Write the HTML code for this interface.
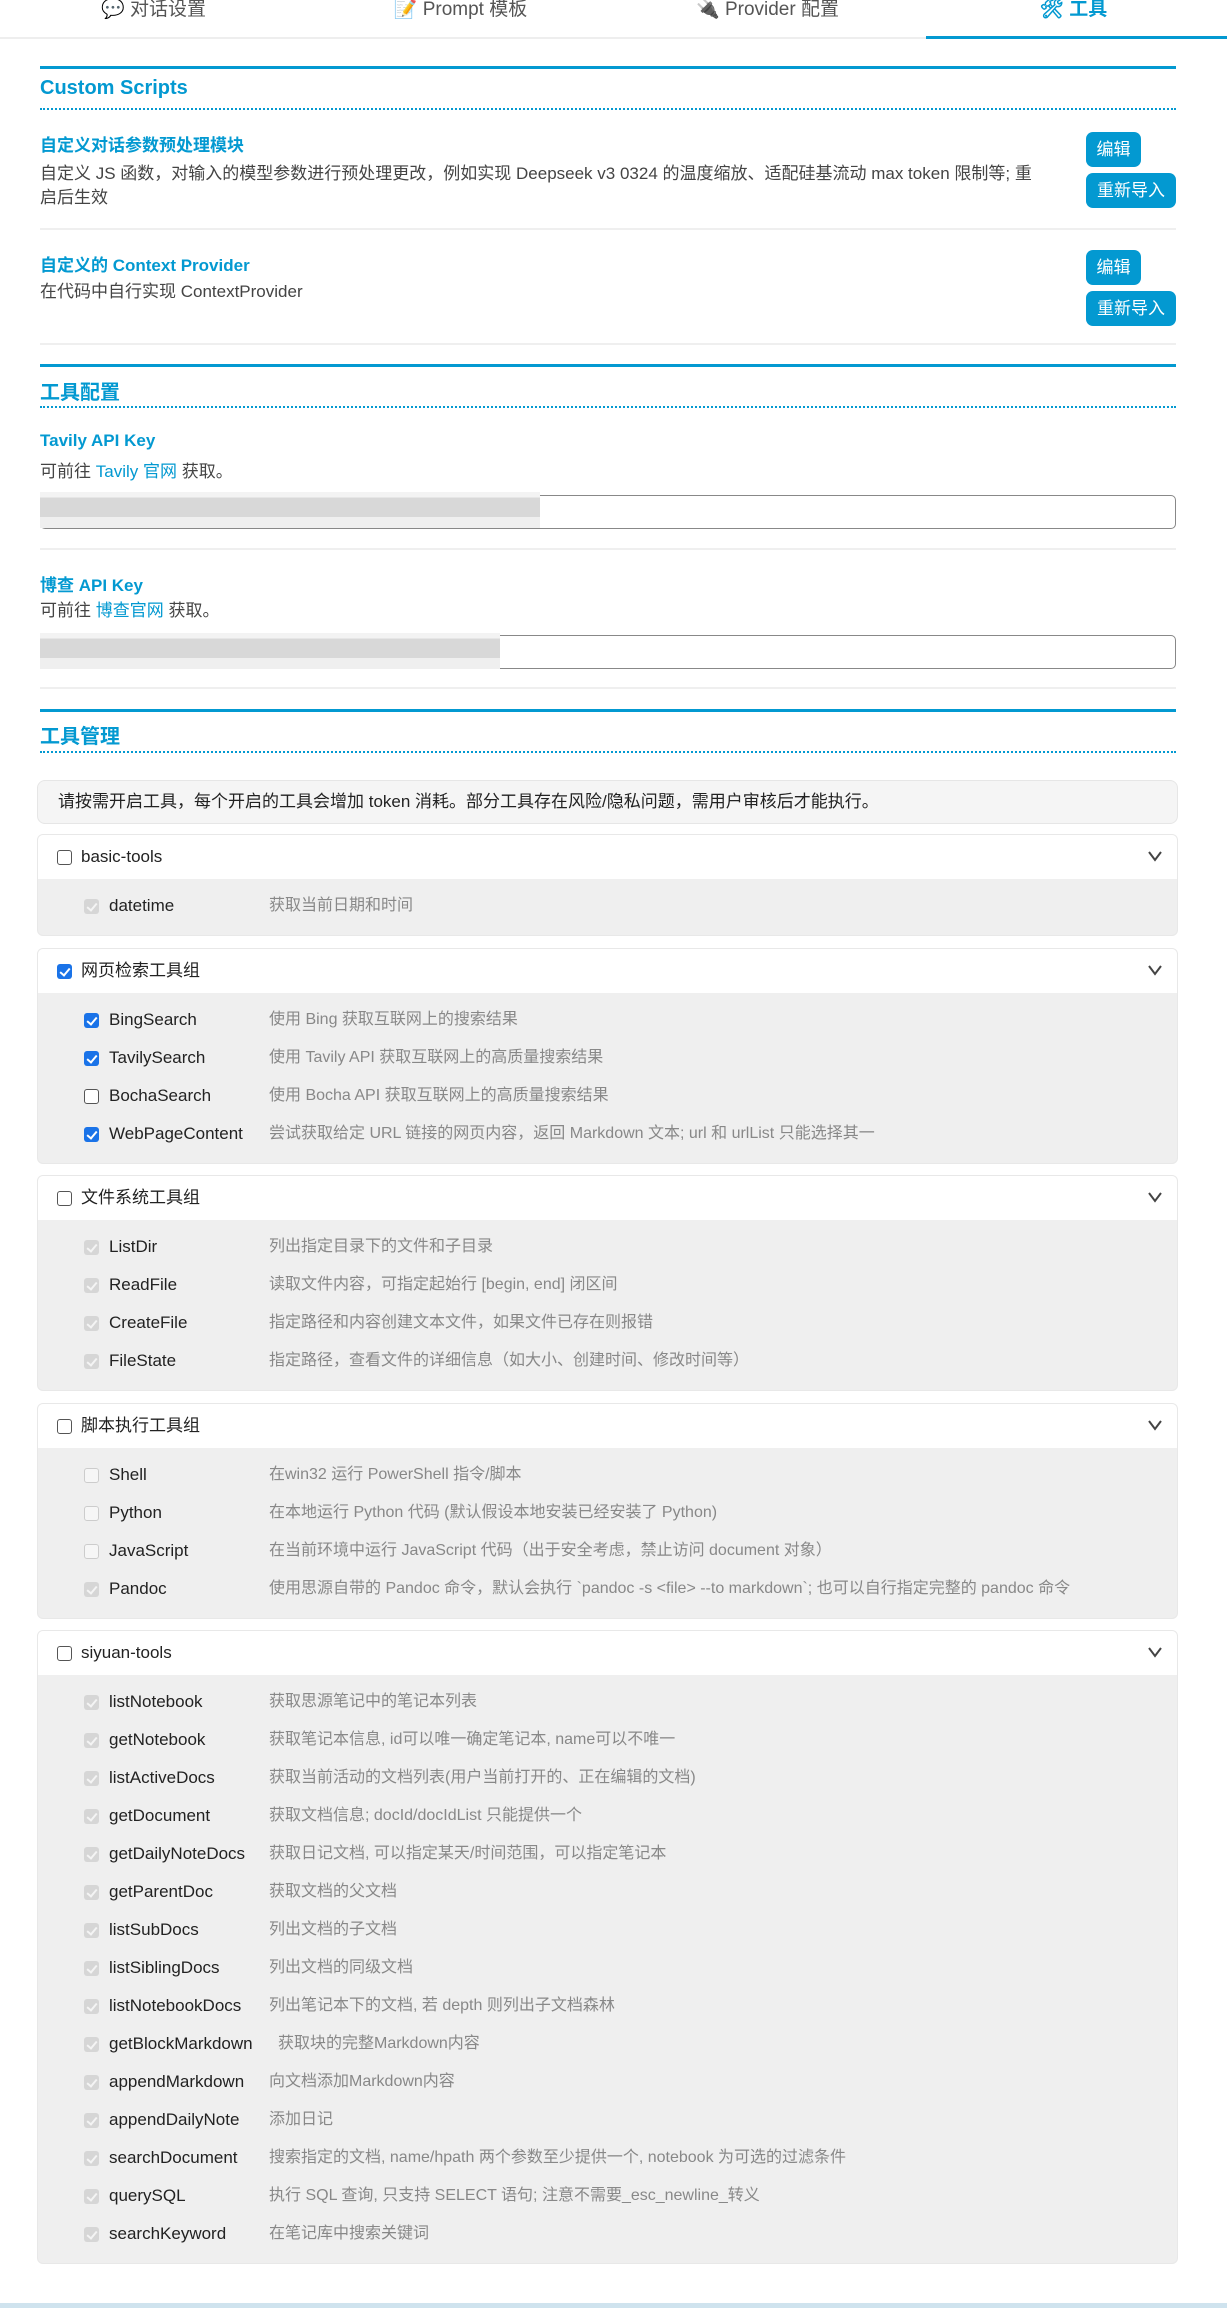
<!DOCTYPE html>
<html><head><meta charset="utf-8"><style>
*{box-sizing:border-box;margin:0;padding:0}
body{width:1227px;height:2308px;background:#fff;font-family:"Liberation Sans","Noto Sans CJK SC",sans-serif;color:#333;position:relative;overflow:hidden}
.a{position:absolute}
.tab{position:absolute;top:0;width:307px;height:38px;text-align:center;font-size:19px;color:#555;line-height:20px}
.blue{color:#0399d1}
.secl{position:absolute;left:40px;width:1136px;height:3px;background:#0399d1}
.dot{position:absolute;left:40px;width:1136px;border-top:2px dotted #0399d1}
.h{position:absolute;left:40px;font-size:20px;font-weight:bold;color:#0399d1}
.t{position:absolute;left:40px;font-size:17px;font-weight:bold;color:#0399d1}
.d{position:absolute;left:40px;font-size:17px;color:#444;line-height:24px}
.sep{position:absolute;left:40px;width:1136px;height:2px;background:#efefef}
.btn{position:absolute;left:1086px;height:35px;background:#0399d1;color:#fff;border-radius:7px;font-size:17px;line-height:35px;text-align:center}
.inp{position:absolute;left:40px;width:1136px;height:34px;border:1px solid #888;border-radius:5px}
.blur{position:absolute;left:40px;height:36px;background:linear-gradient(#f3f3f3 0,#f3f3f3 15%,#d8d8d8 15%,#d8d8d8 70%,#efefef 70%)}
.grp{position:absolute;left:37px;width:1141px;border:1px solid #e8e8e8;border-radius:6px;overflow:hidden;background:#efefef}
.gh{height:44px;background:#fff;position:relative;font-size:17px;line-height:44px;padding-left:43px;color:#222}
.gh .cb{left:19px;top:15px}
.chev{position:absolute;right:14px;top:14px;width:16px;height:14px}
.body{padding:8px 0 10px}
.row{height:38px;position:relative;font-size:17px;line-height:38px}
.row .cb{left:46px;top:12px}
.row .n{position:absolute;left:71px;color:#222}
.row .s{position:absolute;left:231px;font-size:16px;color:#888}
.cb{position:absolute;width:15px;height:15px;border-radius:3px}
.cb.off{border:1.5px solid #555;background:#fff}
.cb.on{background:#1a73e8}
.cb.dis{background:#d6d6d6}
.cb.doff{border:1px solid #ccc;background:#f6f6f6}
.cb.on::after,.cb.dis::after{content:"";position:absolute;left:5px;top:2px;width:4px;height:8px;border:solid #fff;border-width:0 2px 2px 0;transform:rotate(40deg)}
.cb.dis::after{border-color:#f4f4f4}
</style></head><body>
<div class="a" style="left:0;top:37px;width:1227px;height:2px;background:#eee"></div>
<div class="a" style="left:926px;top:36px;width:301px;height:3px;background:#0399d1"></div>
<div class="tab" style="left:0"><span style="color:#7cc0ea">💬</span> 对话设置</div>
<div class="tab" style="left:307px">📝 Prompt 模板</div>
<div class="tab" style="left:614px">🔌 Provider 配置</div>
<div class="tab" style="left:920px;color:#0399d1;font-weight:bold">🛠 工具</div>

<div class="secl" style="top:66px"></div>
<div class="h" style="top:77px">Custom Scripts</div>
<div class="dot" style="top:108px"></div>
<div class="t" style="top:131px">自定义对话参数预处理模块</div>
<div class="d" style="top:162px;width:1000px">自定义 JS 函数，对输入的模型参数进行预处理更改，例如实现 Deepseek v3 0324 的温度缩放、适配硅基流动 max token 限制等; 重启后生效</div>
<div class="btn" style="top:132px;width:55px">编辑</div>
<div class="btn" style="top:173px;width:90px">重新导入</div>
<div class="sep" style="top:228px"></div>
<div class="t" style="top:251px">自定义的 Context Provider</div>
<div class="d" style="top:280px">在代码中自行实现 ContextProvider</div>
<div class="btn" style="top:250px;width:55px">编辑</div>
<div class="btn" style="top:291px;width:90px">重新导入</div>
<div class="sep" style="top:343px"></div>

<div class="secl" style="top:364px"></div>
<div class="h" style="top:376px">工具配置</div>
<div class="dot" style="top:406px"></div>
<div class="t" style="top:431px">Tavily API Key</div>
<div class="d" style="top:460px">可前往 <span class="blue">Tavily 官网</span> 获取。</div>
<div class="inp" style="top:495px"></div>
<div class="blur" style="top:492px;width:500px"></div>
<div class="sep" style="top:548px"></div>
<div class="t" style="top:571px">博查 API Key</div>
<div class="d" style="top:599px">可前往 <span class="blue">博查官网</span> 获取。</div>
<div class="inp" style="top:635px"></div>
<div class="blur" style="top:633px;width:460px"></div>
<div class="sep" style="top:687px"></div>

<div class="secl" style="top:709px"></div>
<div class="h" style="top:720px">工具管理</div>
<div class="dot" style="top:751px"></div>
<div class="a" style="left:37px;top:780px;width:1141px;height:44px;background:#f5f5f5;border:1px solid #e6e6e6;border-radius:8px;font-size:17px;line-height:42px;padding-left:20px;color:#222">请按需开启工具，每个开启的工具会增加 token 消耗。部分工具存在风险/隐私问题，需用户审核后才能执行。</div>

<div class="grp" style="top:834px">
<div class="gh"><span class="cb off"></span>basic-tools<svg class="chev" viewBox="0 0 16 14"><path d="M2 3l6 8 6-8" fill="none" stroke="#444" stroke-width="2"/></svg></div>
<div class="body"><div class="row"><span class="cb dis"></span><span class="n">datetime</span><span class="s">获取当前日期和时间</span></div></div>
</div>

<div class="grp" style="top:948px">
<div class="gh"><span class="cb on"></span>网页检索工具组<svg class="chev" viewBox="0 0 16 14"><path d="M2 3l6 8 6-8" fill="none" stroke="#444" stroke-width="2"/></svg></div>
<div class="body">
<div class="row"><span class="cb on"></span><span class="n">BingSearch</span><span class="s">使用 Bing 获取互联网上的搜索结果</span></div>
<div class="row"><span class="cb on"></span><span class="n">TavilySearch</span><span class="s">使用 Tavily API 获取互联网上的高质量搜索结果</span></div>
<div class="row"><span class="cb off"></span><span class="n">BochaSearch</span><span class="s">使用 Bocha API 获取互联网上的高质量搜索结果</span></div>
<div class="row"><span class="cb on"></span><span class="n">WebPageContent</span><span class="s">尝试获取给定 URL 链接的网页内容，返回 Markdown 文本; url 和 urlList 只能选择其一</span></div>
</div></div>

<div class="grp" style="top:1175px">
<div class="gh"><span class="cb off"></span>文件系统工具组<svg class="chev" viewBox="0 0 16 14"><path d="M2 3l6 8 6-8" fill="none" stroke="#444" stroke-width="2"/></svg></div>
<div class="body">
<div class="row"><span class="cb dis"></span><span class="n">ListDir</span><span class="s">列出指定目录下的文件和子目录</span></div>
<div class="row"><span class="cb dis"></span><span class="n">ReadFile</span><span class="s">读取文件内容，可指定起始行 [begin, end] 闭区间</span></div>
<div class="row"><span class="cb dis"></span><span class="n">CreateFile</span><span class="s">指定路径和内容创建文本文件，如果文件已存在则报错</span></div>
<div class="row"><span class="cb dis"></span><span class="n">FileState</span><span class="s">指定路径，查看文件的详细信息（如大小、创建时间、修改时间等）</span></div>
</div></div>

<div class="grp" style="top:1403px">
<div class="gh"><span class="cb off"></span>脚本执行工具组<svg class="chev" viewBox="0 0 16 14"><path d="M2 3l6 8 6-8" fill="none" stroke="#444" stroke-width="2"/></svg></div>
<div class="body">
<div class="row"><span class="cb doff"></span><span class="n">Shell</span><span class="s">在win32 运行 PowerShell 指令/脚本</span></div>
<div class="row"><span class="cb doff"></span><span class="n">Python</span><span class="s">在本地运行 Python 代码 (默认假设本地安装已经安装了 Python)</span></div>
<div class="row"><span class="cb doff"></span><span class="n">JavaScript</span><span class="s">在当前环境中运行 JavaScript 代码（出于安全考虑，禁止访问 document 对象）</span></div>
<div class="row"><span class="cb dis"></span><span class="n">Pandoc</span><span class="s">使用思源自带的 Pandoc 命令，默认会执行 `pandoc -s &lt;file&gt; --to markdown`; 也可以自行指定完整的 pandoc 命令</span></div>
</div></div>

<div class="grp" style="top:1630px">
<div class="gh"><span class="cb off"></span>siyuan-tools<svg class="chev" viewBox="0 0 16 14"><path d="M2 3l6 8 6-8" fill="none" stroke="#444" stroke-width="2"/></svg></div>
<div class="body">
<div class="row"><span class="cb dis"></span><span class="n">listNotebook</span><span class="s">获取思源笔记中的笔记本列表</span></div>
<div class="row"><span class="cb dis"></span><span class="n">getNotebook</span><span class="s">获取笔记本信息, id可以唯一确定笔记本, name可以不唯一</span></div>
<div class="row"><span class="cb dis"></span><span class="n">listActiveDocs</span><span class="s">获取当前活动的文档列表(用户当前打开的、正在编辑的文档)</span></div>
<div class="row"><span class="cb dis"></span><span class="n">getDocument</span><span class="s">获取文档信息; docId/docIdList 只能提供一个</span></div>
<div class="row"><span class="cb dis"></span><span class="n">getDailyNoteDocs</span><span class="s">获取日记文档, 可以指定某天/时间范围，可以指定笔记本</span></div>
<div class="row"><span class="cb dis"></span><span class="n">getParentDoc</span><span class="s">获取文档的父文档</span></div>
<div class="row"><span class="cb dis"></span><span class="n">listSubDocs</span><span class="s">列出文档的子文档</span></div>
<div class="row"><span class="cb dis"></span><span class="n">listSiblingDocs</span><span class="s">列出文档的同级文档</span></div>
<div class="row"><span class="cb dis"></span><span class="n">listNotebookDocs</span><span class="s">列出笔记本下的文档, 若 depth 则列出子文档森林</span></div>
<div class="row"><span class="cb dis"></span><span class="n">getBlockMarkdown</span><span class="s" style="left:240px">获取块的完整Markdown内容</span></div>
<div class="row"><span class="cb dis"></span><span class="n">appendMarkdown</span><span class="s">向文档添加Markdown内容</span></div>
<div class="row"><span class="cb dis"></span><span class="n">appendDailyNote</span><span class="s">添加日记</span></div>
<div class="row"><span class="cb dis"></span><span class="n">searchDocument</span><span class="s">搜索指定的文档, name/hpath 两个参数至少提供一个, notebook 为可选的过滤条件</span></div>
<div class="row"><span class="cb dis"></span><span class="n">querySQL</span><span class="s">执行 SQL 查询, 只支持 SELECT 语句; 注意不需要_esc_newline_转义</span></div>
<div class="row"><span class="cb dis"></span><span class="n">searchKeyword</span><span class="s">在笔记库中搜索关键词</span></div>
</div></div>

<div class="a" style="left:0;top:2303px;width:1227px;height:5px;background:#cfe3ee"></div>
</body></html>
